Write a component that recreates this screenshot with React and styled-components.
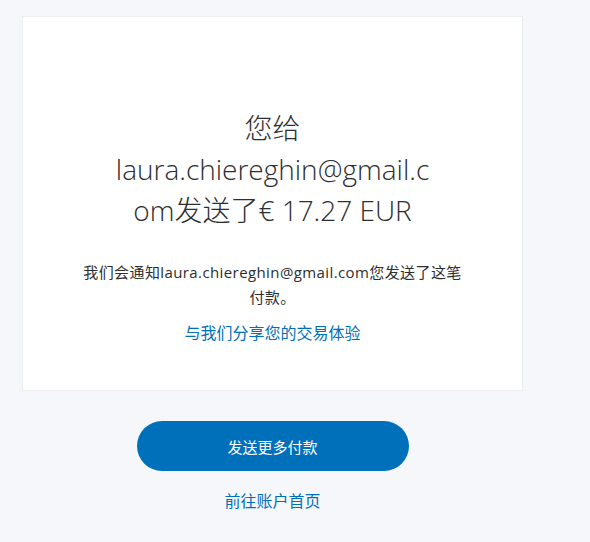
import React from 'react';
import styled, { createGlobalStyle } from 'styled-components';

const GlobalStyle = createGlobalStyle`
  html, body {
    margin: 0;
    padding: 0;
    background: #f5f7fa;
  }
  body {
    font-family: "Noto Sans", "Noto Sans CJK SC", sans-serif;
    color: #2c2e2f;
  }
`;

const Page = styled.div`
  width: 590px;
  min-height: 542px;
  padding: 16px 0 0 22px;
  box-sizing: border-box;
  display: flex;
  flex-direction: column;
  align-items: flex-start;
`;

const Column = styled.div`
  width: 501px;
  display: flex;
  flex-direction: column;
  align-items: center;
`;

const Card = styled.section`
  width: 100%;
  box-sizing: border-box;
  height: 375px;
  background: #ffffff;
  border: 1px solid #eceef0;
  box-shadow: 0 0 1px rgba(0, 0, 0, 0.04);
  padding: 91px 40px 0;
  display: flex;
  flex-direction: column;
  align-items: center;
  text-align: center;
`;

const Heading = styled.h1`
  margin: 0;
  width: 322px;
  font-family: "Open Sans", "Noto Sans CJK SC", sans-serif;
  font-weight: 300;
  font-size: 28px;
  line-height: 41px;
  color: #2c2e2f;
  overflow-wrap: anywhere;
`;

const Notice = styled.p`
  margin: 29px 0 0;
  width: 392px;
  font-family: "Open Sans", "Noto Sans CJK SC", sans-serif;
  font-size: 15px;
  letter-spacing: 0.4px;
  line-height: 25px;
  color: #2c2e2f;
`;

const TextLink = styled.a`
  display: block;
  margin-top: ${(p) => p.$top || 0}px;
  font-family: "Noto Sans CJK SC", sans-serif;
  font-size: 16px;
  line-height: 24px;
  color: #0070ba;
  text-decoration: none;
  cursor: pointer;
`;

const PrimaryButton = styled.button`
  margin-top: 30px;
  width: 272px;
  height: 50px;
  border: none;
  border-radius: 25px;
  background: #0070ba;
  color: #ffffff;
  font-family: "Noto Sans CJK SC", sans-serif;
  font-size: 15px;
  font-weight: 400;
  cursor: pointer;
`;

export default function App() {
  return (
    <>
      <GlobalStyle />
      <Page>
        <Column>
          <Card>
            <Heading>您给 laura.chiereghin@gmail.com发送了€ 17.27 EUR</Heading>
            <Notice>我们会通知laura.chiereghin@gmail.com您发送了这笔付款。</Notice>
            <TextLink $top={10}>与我们分享您的交易体验</TextLink>
          </Card>
          <PrimaryButton>发送更多付款</PrimaryButton>
          <TextLink $top={17}>前往账户首页</TextLink>
        </Column>
      </Page>
    </>
  );
}
